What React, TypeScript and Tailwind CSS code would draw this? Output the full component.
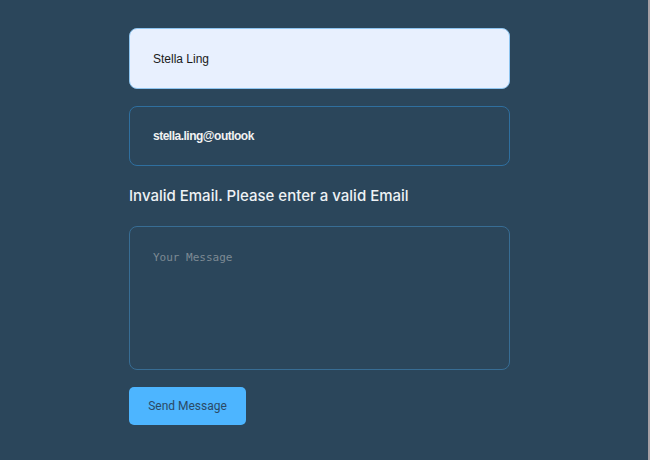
import React from "react";

export default function App() {
  return (
    <div className="w-[650px] h-[460px] bg-[#2b465b] flex overflow-hidden">
      <div className="flex-1 flex flex-col items-start pl-[129px] pt-[28px]">
        <div className="w-[381px] h-[61px] rounded-[8px] bg-[#e8f0fe] border border-[#8ec5f0] flex items-center pl-[23px] text-[12px] text-[#1a1a1a] [font-family:'Liberation_Sans',Arial,sans-serif]">
          Stella Ling
        </div>
        <div className="mt-[17px] w-[381px] h-[60px] rounded-[8px] border border-[#2f6f9f] flex items-center pl-[23px] text-[12px] font-bold text-[#f2f2f2] [font-family:'Liberation_Sans',Arial,sans-serif] tracking-[-0.5px]">
          stella.ling@outlook
        </div>
        <div className="mt-[20px] text-[15px] font-medium text-[#eef2f5] [font-family:Inter,sans-serif] leading-[20px]">
          Invalid Email. Please enter a valid Email
        </div>
        <div className="mt-[20px] w-[381px] h-[144px] rounded-[8px] border border-[#386d94] pl-[23px] pt-[23px] text-[11px] text-[#7d8a94] [font-family:'DejaVu_Sans_Mono',monospace]">
          Your Message
        </div>
        <div className="mt-[17px] w-[117px] h-[38px] rounded-[5px] bg-[#4db5ff] flex items-center justify-center text-[12px] text-[#2b4a66] [font-family:Roboto,sans-serif]">
          Send Message
        </div>
      </div>
      <div className="w-[2px] h-full bg-[#a9a1a6]" />
    </div>
  );
}
